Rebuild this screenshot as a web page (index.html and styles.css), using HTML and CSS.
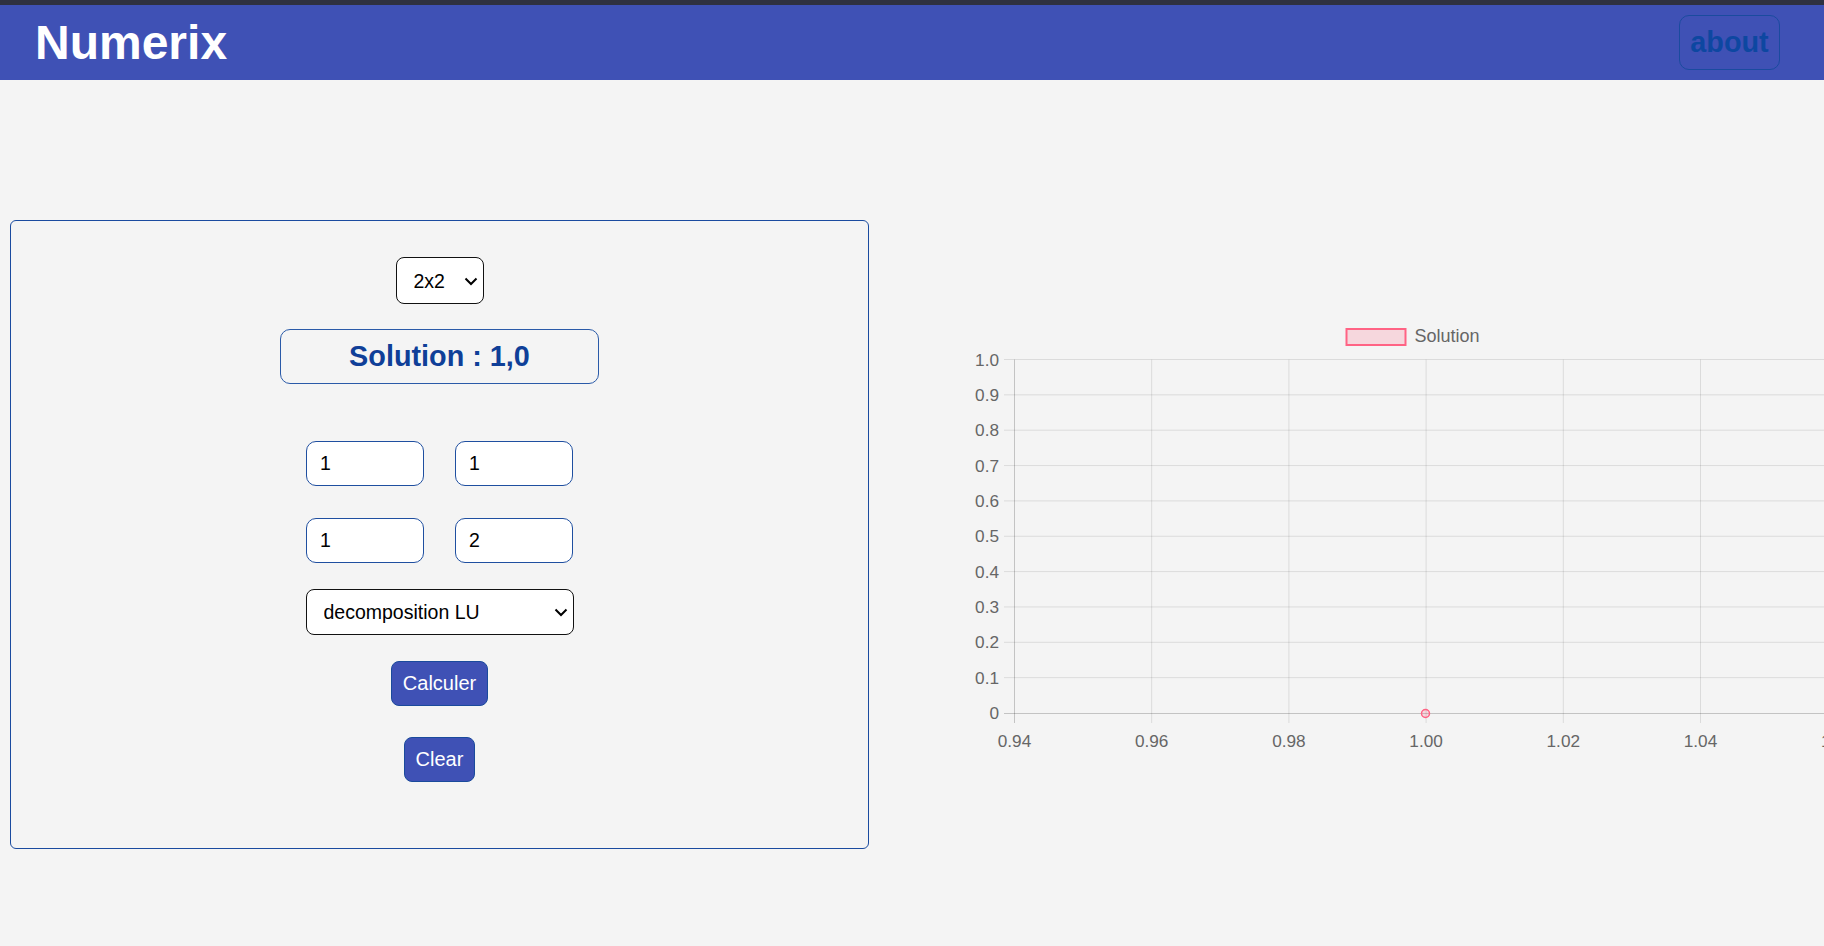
FILE: index.html
```html
<!DOCTYPE html>
<html lang="fr">
<head>
<meta charset="utf-8">
<title>Numerix</title>
<link rel="stylesheet" href="styles.css">
</head>
<body>
<div class="topstrip"></div>
<header class="header">
  <h1 class="brand">Numerix</h1>
  <button class="about">about</button>
</header>
<main class="main">
  <section class="card">
    <span class="select-wrap">
      <select class="size-select">
        <option>2x2</option>
        <option>3x3</option>
      </select>
      <svg class="chev" width="14" height="9" viewBox="0 0 14 9"><path d="M1.5 1.5 L7 7 L12.5 1.5" fill="none" stroke="#000" stroke-width="2"/></svg>
    </span>
    <div class="solution">Solution : 1,0</div>
    <div class="matrix">
      <input class="cell" value="1">
      <input class="cell" value="1">
      <input class="cell" value="1">
      <input class="cell" value="2">
    </div>
    <span class="select-wrap method-wrap">
      <select class="method-select">
        <option>decomposition LU</option>
      </select>
      <svg class="chev" width="14" height="9" viewBox="0 0 14 9"><path d="M1.5 1.5 L7 7 L12.5 1.5" fill="none" stroke="#000" stroke-width="2"/></svg>
    </span>
    <button class="btn btn-calc">Calculer</button>
    <button class="btn btn-clear">Clear</button>
  </section>
  <div class="chart-wrap">
    <svg class="chart" width="924" height="480" viewBox="0 0 924 480">
      <rect x="446.5" y="29" width="59" height="16" fill="rgba(255,99,132,0.2)" stroke="rgb(255,99,132)" stroke-width="2"/>
      <text x="514.5" y="42" class="lbl legend">Solution</text>
      <g stroke="rgba(0,0,0,0.1)" stroke-width="1">
        <line x1="104" y1="59.5" x2="924" y2="59.5"/>
        <line x1="104" y1="94.85" x2="924" y2="94.85"/>
        <line x1="104" y1="130.2" x2="924" y2="130.2"/>
        <line x1="104" y1="165.55" x2="924" y2="165.55"/>
        <line x1="104" y1="200.9" x2="924" y2="200.9"/>
        <line x1="104" y1="236.25" x2="924" y2="236.25"/>
        <line x1="104" y1="271.6" x2="924" y2="271.6"/>
        <line x1="104" y1="306.95" x2="924" y2="306.95"/>
        <line x1="104" y1="342.3" x2="924" y2="342.3"/>
        <line x1="104" y1="377.65" x2="924" y2="377.65"/>
        <line x1="251.7" y1="59.5" x2="251.7" y2="423"/>
        <line x1="388.9" y1="59.5" x2="388.9" y2="423"/>
        <line x1="526.1" y1="59.5" x2="526.1" y2="423"/>
        <line x1="663.3" y1="59.5" x2="663.3" y2="423"/>
        <line x1="800.5" y1="59.5" x2="800.5" y2="423"/>
      </g>
      <g stroke="rgba(0,0,0,0.2)" stroke-width="1">
        <line x1="104" y1="413.5" x2="924" y2="413.5"/>
        <line x1="114.5" y1="59.5" x2="114.5" y2="423"/>
      </g>
      <g class="lbl" text-anchor="end">
        <text x="99" y="65.5">1.0</text>
        <text x="99" y="100.9">0.9</text>
        <text x="99" y="136.2">0.8</text>
        <text x="99" y="171.6">0.7</text>
        <text x="99" y="206.9">0.6</text>
        <text x="99" y="242.3">0.5</text>
        <text x="99" y="277.6">0.4</text>
        <text x="99" y="313">0.3</text>
        <text x="99" y="348.3">0.2</text>
        <text x="99" y="383.7">0.1</text>
        <text x="99" y="419">0</text>
      </g>
      <g class="lbl" text-anchor="middle">
        <text x="114.5" y="447">0.94</text>
        <text x="251.7" y="447">0.96</text>
        <text x="388.9" y="447">0.98</text>
        <text x="526.1" y="447">1.00</text>
        <text x="663.3" y="447">1.02</text>
        <text x="800.5" y="447">1.04</text>
        <text x="937.7" y="447">1.06</text>
      </g>
      <circle cx="525.5" cy="413.5" r="4" fill="rgba(255,99,132,0.2)" stroke="rgb(255,99,132)" stroke-width="1.5"/>
    </svg>
  </div>
</main>
</body>
</html>
```

FILE: styles.css
```css
* { box-sizing: border-box; }
html, body {
  margin: 0;
  padding: 0;
  background: #f4f4f4;
  font-family: "Liberation Sans", Arial, sans-serif;
  overflow: hidden;
}
.topstrip {
  height: 5px;
  background: #2f3140;
}
.header {
  height: 75px;
  background: #3f51b5;
  display: flex;
  align-items: center;
  justify-content: space-between;
  padding: 0 44px 0 35px;
}
.brand {
  margin: 0;
  color: #ffffff;
  font-size: 48px;
  font-weight: bold;
  line-height: 1;
}
.about {
  width: 101px;
  height: 55px;
  background: transparent;
  border: 1px solid #1a4b9f;
  border-radius: 10px;
  color: #0d47a1;
  font-family: "Liberation Sans", Arial, sans-serif;
  font-size: 28.8px;
  font-weight: bold;
  padding: 0;
}
.main {
  display: flex;
  align-items: flex-start;
  padding-left: 10px;
}
.card {
  margin-top: 140px;
  width: 859px;
  border: 1px solid #1a4b9f;
  border-radius: 6px;
  padding: 36px 0 66px;
  display: flex;
  flex-direction: column;
  align-items: center;
}
.select-wrap {
  position: relative;
  display: block;
}
.chev {
  position: absolute;
  right: 6px;
  top: 50%;
  margin-top: -4px;
  pointer-events: none;
}
.size-select,
.method-select {
  -webkit-appearance: none;
  appearance: none;
  display: block;
  background: #ffffff;
  border: 1px solid #111;
  border-radius: 8px;
  font-family: "Liberation Sans", Arial, sans-serif;
  font-size: 19.5px;
  color: #000;
  padding: 0 24px 0 17px;
}
.size-select {
  width: 88px;
  height: 47px;
}
.solution {
  margin-top: 25px;
  width: 319px;
  height: 55px;
  border: 1px solid #2a5aa8;
  border-radius: 10px;
  display: flex;
  align-items: center;
  justify-content: center;
  color: #0f3f98;
  font-size: 28.8px;
  font-weight: bold;
}
.matrix {
  margin-top: 57px;
  display: grid;
  grid-template-columns: 118px 118px;
  column-gap: 31px;
  row-gap: 32px;
}
.cell {
  width: 118px;
  height: 45px;
  border: 1px solid #1f4fa0;
  border-radius: 10px;
  background: #ffffff;
  padding: 0 13px;
  font-family: "Liberation Sans", Arial, sans-serif;
  font-size: 19.5px;
  color: #000;
  outline: none;
}
.method-wrap { margin-top: 26px; }
.method-select {
  width: 268px;
  height: 46px;
}
.btn {
  height: 45px;
  padding: 0 11px;
  background: #3f51b5;
  border: 1px solid #1a4a9c;
  border-radius: 8px;
  color: #ffffff;
  font-family: "Liberation Sans", Arial, sans-serif;
  font-size: 20px;
}
.btn-calc { margin-top: 26px; }
.btn-clear { margin-top: 31px; }
.chart-wrap {
  margin-left: 31px;
  margin-top: 220px;
  width: 924px;
  overflow: hidden;
}
.chart { display: block; }
.lbl {
  font-family: "Liberation Sans", Arial, sans-serif;
  font-size: 17.2px;
  fill: #666666;
}
.legend { font-size: 18px; }
```
